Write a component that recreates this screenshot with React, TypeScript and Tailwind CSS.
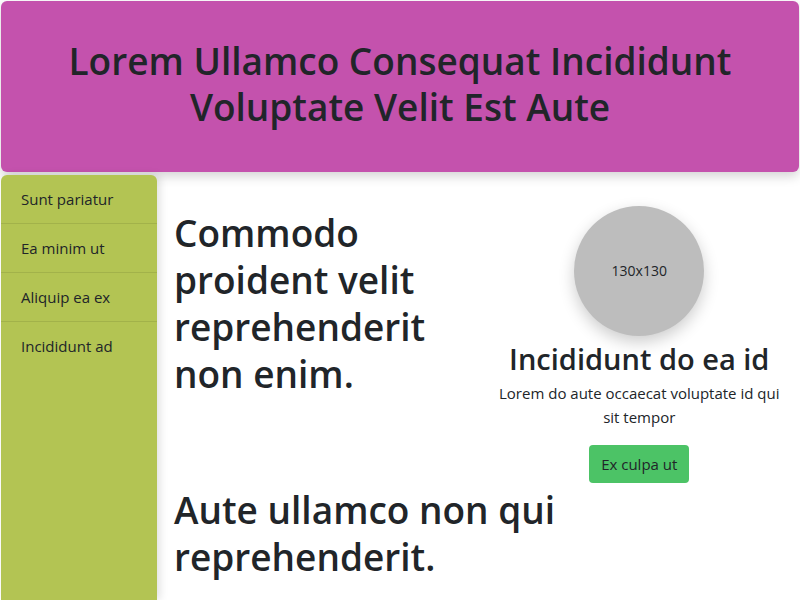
import React from 'react';

const navItems = ['Sunt pariatur', 'Ea minim ut', 'Aliquip ea ex', 'Incididunt ad'];

export default function App() {
  return (
    <div className="min-h-screen bg-white p-px font-['Open_Sans',sans-serif] text-[#212529]">
      <header className="flex h-[171px] items-center justify-center rounded-md bg-[#c452ad] px-12 pb-[6px] text-center shadow-[0_4px_12px_rgba(0,0,0,0.18)]">
        <h1 className="max-w-[700px] text-[37px] font-semibold leading-[46px]">
          Lorem Ullamco Consequat Incididunt Voluptate Velit Est Aute
        </h1>
      </header>

      <div className="mt-[3px] flex">
        <nav className="min-h-[425px] w-[156px] shrink-0 rounded-t-md bg-[#b3c453] shadow-[3px_0_8px_rgba(0,0,0,0.12)]">
          <ul>
            {navItems.map((item, i) => (
              <li
                key={item}
                className={
                  'flex h-[49px] items-center px-5 text-[15px] ' +
                  (i < navItems.length - 1 ? 'border-b border-[#a2b24a]' : '')
                }
              >
                {item}
              </li>
            ))}
          </ul>
        </nav>

        <main className="flex-1 px-[17px]">
          <div className="grid grid-cols-2 gap-[37px]">
            <h2 className="pt-[34px] text-[37px] font-semibold leading-[47px]">
              Commodo proident velit reprehenderit non enim.
            </h2>
            <div className="flex flex-col items-center pt-[31px] text-center">
              <div className="flex h-[130px] w-[130px] items-center justify-center rounded-full bg-[#bdbdbd] text-sm shadow-[0_6px_16px_rgba(0,0,0,0.2)]">
                130x130
              </div>
              <h3 className="mt-[3px] text-[29px] font-semibold leading-[40px]">Incididunt do ea id</h3>
              <p className="mt-[2px] max-w-[300px] text-[15px] leading-6">
                Lorem do aute occaecat voluptate id qui sit tempor
              </p>
              <button className="mt-4 rounded bg-[#4cc366] px-3 py-[7px] text-[15px] leading-6">
                Ex culpa ut
              </button>
            </div>
          </div>
          <h2 className="mt-[3px] text-[37px] font-semibold leading-[47px]">
            Aute ullamco non qui reprehenderit.
          </h2>
        </main>
      </div>
    </div>
  );
}
